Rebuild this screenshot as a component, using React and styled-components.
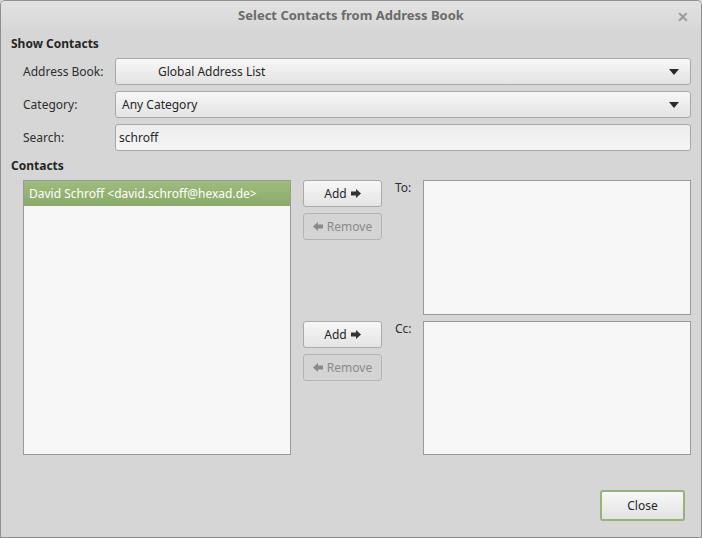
import styled, { createGlobalStyle } from 'styled-components';

const GlobalStyle = createGlobalStyle`
    html, body {
        margin: 0;
        padding: 0;
        background: #d6d6d6;
    }
    body {
        font-family: "Noto Sans", "Open Sans", sans-serif;
        font-size: 12px;
        color: #2e2e2e;
    }
`;

const Window = styled.div`
    box-sizing: border-box;
    width: 702px;
    height: 538px;
    border: 1px solid #8f8f8f;
    border-radius: 5px 5px 0 0;
    background: #d6d6d6;
    display: flex;
    flex-direction: column;
    overflow: hidden;
`;

const TitleBar = styled.div`
    position: relative;
    height: 28px;
    flex-shrink: 0;
    display: flex;
    align-items: center;
    justify-content: center;
    background: linear-gradient(#e2e2e2, #d8d8d8);
    font-weight: 700;
    font-size: 13px;
    color: #6b6b6b;
`;

const CloseX = styled.span`
    position: absolute;
    right: 12px;
    top: 6px;
    font-size: 14px;
    font-weight: 700;
    color: #9a9a9a;
`;

const Body = styled.div`
    flex: 1;
    display: flex;
    flex-direction: column;
    padding: 0 10px 0 10px;
`;

const Heading = styled.div`
    font-weight: 700;
    height: 16px;
    line-height: 16px;
    margin-top: ${p => p.$top}px;
    color: #262626;
`;

const FormGrid = styled.div`
    display: grid;
    grid-template-columns: 92px 1fr;
    row-gap: 6px;
    padding-left: 12px;
    margin-top: 6px;
`;

const Label = styled.label`
    display: flex;
    align-items: center;
    height: 27px;
`;

const Combo = styled.div`
    box-sizing: border-box;
    height: 27px;
    border: 1px solid #a8a8a8;
    border-radius: 3px;
    background: linear-gradient(#f7f7f7, #e3e3e3);
    display: flex;
    align-items: center;
    padding-left: ${p => p.$indent}px;
    padding-right: 11px;
    color: #262626;
`;

const ComboText = styled.span`
    flex: 1;
`;

const Entry = styled.div`
    box-sizing: border-box;
    height: 27px;
    border: 1px solid #a8a8a8;
    border-radius: 3px;
    background: linear-gradient(#ececec, #f6f6f6);
    display: flex;
    align-items: center;
    padding-left: 3px;
    color: #262626;
`;

const ContactsGrid = styled.div`
    display: grid;
    grid-template-columns: 268px 79px 17px 268px;
    grid-template-rows: 135px 134px;
    column-gap: 12px;
    row-gap: 6px;
    padding-left: 12px;
    margin-top: 6px;
`;

const ListBox = styled.div`
    box-sizing: border-box;
    border: 1px solid #9a9a9a;
    background: #f7f7f7;
    grid-column: ${p => p.$col};
    grid-row: ${p => p.$row};
`;

const ContactRow = styled.div`
    height: 25px;
    display: flex;
    align-items: center;
    padding-left: 5px;
    background: linear-gradient(#9ebd7d, #8aaa69);
    color: #ffffff;
`;

const ButtonCol = styled.div`
    grid-column: 2;
    grid-row: ${p => p.$row};
    display: flex;
    flex-direction: column;
    gap: 6px;
`;

const Button = styled.div`
    box-sizing: border-box;
    height: 27px;
    border: 1px solid ${p => (p.$disabled ? '#b4b4b4' : '#aaaaaa')};
    border-radius: 3px;
    background: ${p => (p.$disabled ? '#d4d4d4' : 'linear-gradient(#f7f7f7, #e4e4e4)')};
    color: ${p => (p.$disabled ? '#8a8a8a' : '#262626')};
    display: flex;
    align-items: center;
    justify-content: center;
    gap: 4px;
`;

const FieldLabel = styled.div`
    grid-column: 3;
    grid-row: ${p => p.$row};
    margin-left: 1px;
    line-height: 16px;
    white-space: nowrap;
`;

const Footer = styled.div`
    display: flex;
    justify-content: flex-end;
    margin-top: 35px;
    padding-right: 6px;
`;

const CloseButton = styled.div`
    box-sizing: border-box;
    width: 85px;
    height: 31px;
    border: 2px solid #95b37a;
    border-radius: 3px;
    background: linear-gradient(#f7f7f7, #e3e3e3);
    display: flex;
    align-items: center;
    justify-content: center;
    color: #262626;
`;

const Arrow = ({ dir, color }) => (
    <svg width="10" height="9" viewBox="0 0 10 9">
        {dir === 'right' ? (
            <path d="M0 2.5h5V0l5 4.5L5 9V6.5H0z" fill={color} />
        ) : (
            <path d="M10 2.5H5V0L0 4.5 5 9V6.5h5z" fill={color} />
        )}
    </svg>
);

const DropArrow = () => (
    <svg width="10" height="6" viewBox="0 0 10 6">
        <path d="M0 0h10L5 6z" fill="#2b2b2b" />
    </svg>
);

const AddRemove = ({ row }) => (
    <ButtonCol $row={row}>
        <Button>Add <Arrow dir="right" color="#333" /></Button>
        <Button $disabled><Arrow dir="left" color="#8a8a8a" /> Remove</Button>
    </ButtonCol>
);

export default function App() {
    return (
        <>
            <GlobalStyle />
            <Window>
                <TitleBar>
                    Select Contacts from Address Book
                    <CloseX>✕</CloseX>
                </TitleBar>
                <Body>
                    <Heading $top={7}>Show Contacts</Heading>
                    <FormGrid>
                        <Label>Address Book:</Label>
                        <Combo $indent={42}>
                            <ComboText>Global Address List</ComboText>
                            <DropArrow />
                        </Combo>
                        <Label>Category:</Label>
                        <Combo $indent={6}>
                            <ComboText>Any Category</ComboText>
                            <DropArrow />
                        </Combo>
                        <Label>Search:</Label>
                        <Entry>schroff</Entry>
                    </FormGrid>
                    <Heading $top={7}>Contacts</Heading>
                    <ContactsGrid>
                        <ListBox $col="1" $row="1 / span 2">
                            <ContactRow>David Schroff &lt;david.schroff@hexad.de&gt;</ContactRow>
                        </ListBox>
                        <AddRemove row="1" />
                        <FieldLabel $row="1">To:</FieldLabel>
                        <ListBox $col="4" $row="1" />
                        <AddRemove row="2" />
                        <FieldLabel $row="2">Cc:</FieldLabel>
                        <ListBox $col="4" $row="2" />
                    </ContactsGrid>
                    <Footer>
                        <CloseButton>Close</CloseButton>
                    </Footer>
                </Body>
            </Window>
        </>
    );
}
